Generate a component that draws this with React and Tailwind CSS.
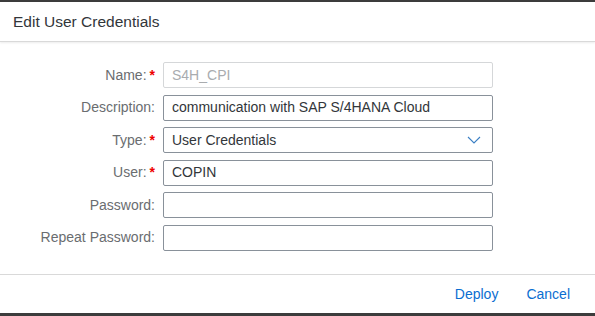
import React from 'react';

const font = { fontFamily: '"Liberation Sans", Arial, sans-serif' };

function Label({ text, required }) {
  return (
    <label className="flex items-center justify-end text-[14px] text-[#6a6d70]">
      {text}
      {required && <span className="ml-[3px] text-[#e00] font-bold">*</span>}
    </label>
  );
}

function Field({ value, disabled, select }) {
  return (
    <div
      className={`h-[26px] flex items-center justify-between px-[8px] rounded-[2px] border text-[14px] ${
        disabled ? 'border-[#d5d7d9] text-[#a9acaf]' : 'border-[#89919a] text-[#32363a]'
      }`}
    >
      <span>{value}</span>
      {select && (
        <svg width="14" height="8" viewBox="0 0 14 8" className="mr-[3px]">
          <path d="M1 1 L7 7 L13 1" fill="none" stroke="#3b7fc4" strokeWidth="1.1" />
        </svg>
      )}
    </div>
  );
}

export default function App() {
  const rows = [
    { label: 'Name:', required: true, value: 'S4H_CPI', disabled: true },
    { label: 'Description:', value: 'communication with SAP S/4HANA Cloud' },
    { label: 'Type:', required: true, value: 'User Credentials', select: true },
    { label: 'User:', required: true, value: 'COPIN' },
    { label: 'Password:', value: '' },
    { label: 'Repeat Password:', value: '' },
  ];

  return (
    <div style={font} className="w-[595px] h-[316px] flex flex-col bg-white border-t-2 border-b-[3px] border-[#3c3c3c]">
      {/* header */}
      <div className="h-[40px] shrink-0 flex items-center px-[13px] text-[15.5px] text-[#32363a] border-b border-[#d9d9d9] shadow-[0_1px_2px_rgba(0,0,0,0.08)]">
        Edit User Credentials
      </div>

      {/* form */}
      <div className="flex-1 pt-[20px]">
        <div className="grid grid-cols-[155px_330px] gap-x-[8px] gap-y-[6.5px]">
          {rows.map((r) => (
            <React.Fragment key={r.label}>
              <Label text={r.label} required={r.required} />
              <Field value={r.value} disabled={r.disabled} select={r.select} />
            </React.Fragment>
          ))}
        </div>
      </div>

      {/* footer */}
      <div className="h-[39px] shrink-0 flex items-center justify-end gap-[28px] pr-[25px] border-t border-[#d9d9d9] text-[14px] text-[#0a6ed1]">
        <button>Deploy</button>
        <button>Cancel</button>
      </div>
    </div>
  );
}
